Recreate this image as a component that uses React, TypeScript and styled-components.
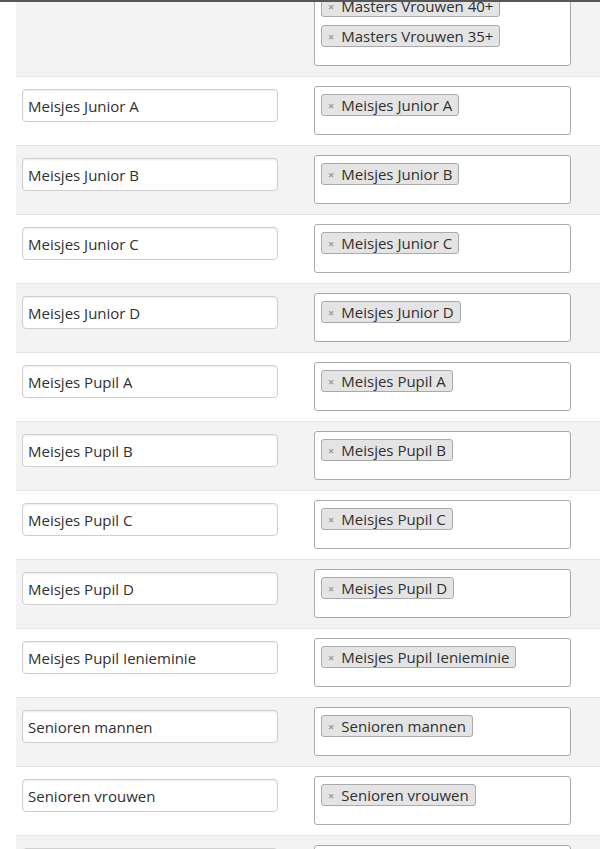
import { createGlobalStyle, styled } from "styled-components";

const GlobalStyle = createGlobalStyle`
  html, body {
    margin: 0;
    padding: 0;
    overflow: hidden;
    background: #ffffff;
    font-family: "Open Sans", "Liberation Sans", Arial, sans-serif;
    color: #333333;
  }
`;

const TopEdge = styled.div`
  position: fixed;
  top: 0;
  left: 0;
  right: 0;
  height: 2px;
  background: #575757;
  z-index: 2;
`;

const List = styled.div`
  margin-top: -112px;
`;

const Row = styled.div<{ $shaded: boolean }>`
  display: grid;
  grid-template-columns: 292px 257px;
  align-items: start;
  margin-left: 16px;
  padding: 9px 0 10px 6px;
  background: ${(p) => (p.$shaded ? "#f3f3f3" : "#ffffff")};
  border-bottom: 1px solid #e4e4e4;
`;

const NameInput = styled.input`
  box-sizing: border-box;
  width: 256px;
  height: 33px;
  margin: 3px 0 0 0;
  padding: 0 5px;
  border: 1px solid #cfcfcf;
  border-radius: 4px;
  box-shadow: inset 0 1px 2px rgba(0, 0, 0, 0.08);
  background: #ffffff;
  font-family: inherit;
  font-size: 15px;
  color: #303030;
  outline: none;
`;

const SelectBox = styled.div`
  box-sizing: border-box;
  min-height: 49px;
  padding: 7px 6px 18px 6px;
  border: 1px solid #aaaaaa;
  border-radius: 3px;
  background: #ffffff;
  display: flex;
  flex-wrap: wrap;
  align-content: flex-start;
  gap: 8px 5px;
`;

const Tag = styled.span`
  box-sizing: border-box;
  display: inline-flex;
  align-items: center;
  height: 22px;
  padding: 0 6px 0 5px;
  border: 1px solid #aaaaaa;
  border-radius: 3px;
  background: #e4e4e4;
  font-size: 15px;
  color: #303030;
  white-space: nowrap;
`;

const Remove = styled.span`
  color: #999999;
  font-size: 11px;
  font-weight: bold;
  margin-right: 7px;
  margin-left: 1px;
`;

type Entry = { name: string; tags: string[] };

const entries: Entry[] = [
  {
    name: "Masters Vrouwen",
    tags: [
      "Masters Vrouwen 55+",
      "Masters Vrouwen 50+",
      "Masters Vrouwen 45+",
      "Masters Vrouwen 40+",
      "Masters Vrouwen 35+",
    ],
  },
  { name: "Meisjes Junior A", tags: ["Meisjes Junior A"] },
  { name: "Meisjes Junior B", tags: ["Meisjes Junior B"] },
  { name: "Meisjes Junior C", tags: ["Meisjes Junior C"] },
  { name: "Meisjes Junior D", tags: ["Meisjes Junior D"] },
  { name: "Meisjes Pupil A", tags: ["Meisjes Pupil A"] },
  { name: "Meisjes Pupil B", tags: ["Meisjes Pupil B"] },
  { name: "Meisjes Pupil C", tags: ["Meisjes Pupil C"] },
  { name: "Meisjes Pupil D", tags: ["Meisjes Pupil D"] },
  { name: "Meisjes Pupil Ienieminie", tags: ["Meisjes Pupil Ienieminie"] },
  { name: "Senioren mannen", tags: ["Senioren mannen"] },
  { name: "Senioren vrouwen", tags: ["Senioren vrouwen"] },
  { name: "Veteranen mannen", tags: ["Veteranen mannen"] },
];

const App = (): JSX.Element => {
  return (
    <>
      <GlobalStyle />
      <TopEdge />
      <List>
        {entries.map((entry, i) => (
          <Row key={entry.name} $shaded={i % 2 === 0}>
            <NameInput defaultValue={entry.name} />
            <SelectBox>
              {entry.tags.map((tag) => (
                <Tag key={tag}>
                  <Remove>×</Remove>
                  {tag}
                </Tag>
              ))}
            </SelectBox>
          </Row>
        ))}
      </List>
    </>
  );
};

export default App;
